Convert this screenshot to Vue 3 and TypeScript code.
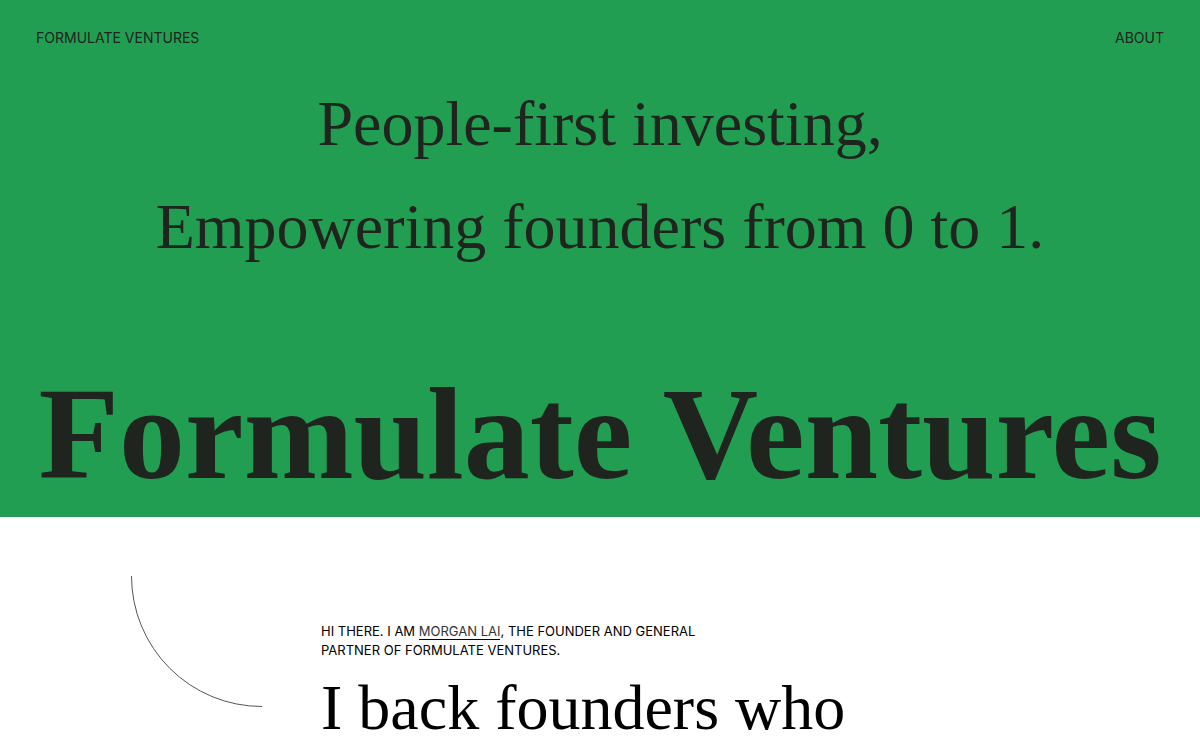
<script setup lang="ts">
const lines: string[] = ['People-first investing,', 'Empowering founders from 0 to 1.']
</script>

<template>
  <div class="page">
    <section class="hero">
      <header class="bar">
        <a class="nav" href="#home">FORMULATE VENTURES</a>
        <a class="nav" href="#about">ABOUT</a>
      </header>
      <div class="taglines">
        <p v-for="line in lines" :key="line" class="display">{{ line }}</p>
      </div>
      <h1 class="wordmark">Formulate Ventures</h1>
    </section>
    <main class="intro">
      <svg class="arc" viewBox="0 0 132 132" aria-hidden="true">
        <path d="M.5 0A130.500 130.500 0 0 0 131 130.500" fill="none" stroke="#555" />
      </svg>
      <div class="copy">
        <p class="lead">HI THERE. I AM <a href="#morgan">MORGAN LAI</a>, THE FOUNDER AND GENERAL PARTNER OF FORMULATE VENTURES.</p>
        <h2 class="display">I back founders who</h2>
      </div>
    </main>
  </div>
</template>

<style scoped>
.page {
  color: #1f241e;
  font-family: Inter, "Liberation Sans", sans-serif;
  background: #fff;
}
.hero {
  background: #229e52;
  padding: 28px 36px 8px;
}
.bar {
  display: flex;
  justify-content: space-between;
}
.nav {
  color: inherit;
  text-decoration: none;
  font-size: 14px;
  line-height: 20px;
}
.taglines {
  margin-top: 24px;
  text-align: center;
}
.display {
  margin: 0;
  font-family: "Liberation Serif", serif;
  font-size: 64px;
  font-weight: 400;
  line-height: 103px;
  white-space: nowrap;
}
.wordmark {
  margin: 81px 0 0;
  font-family: "Liberation Serif", serif;
  font-size: 132px;
  line-height: 150px;
  font-weight: 700;
  text-align: center;
  white-space: nowrap;
}
.intro {
  display: grid;
  grid-template-columns: 132px minmax(0, 1fr);
  column-gap: 58px;
  padding: 59px 36px 0 131px;
  color: #000;
}
.arc {
  width: 132px;
  height: 132px;
}
.copy {
  padding-top: 46px;
}
.lead {
  max-width: 400px;
  margin: 0;
  font-size: 13px;
  line-height: 19px;
}
.lead a {
  color: #333;
  text-decoration: none;
  border-bottom: 1px solid #000;
}
.intro .display {
  line-height: 96px;
}
</style>

<style>
body {
  margin: 0;
  background: #fff;
}
</style>
